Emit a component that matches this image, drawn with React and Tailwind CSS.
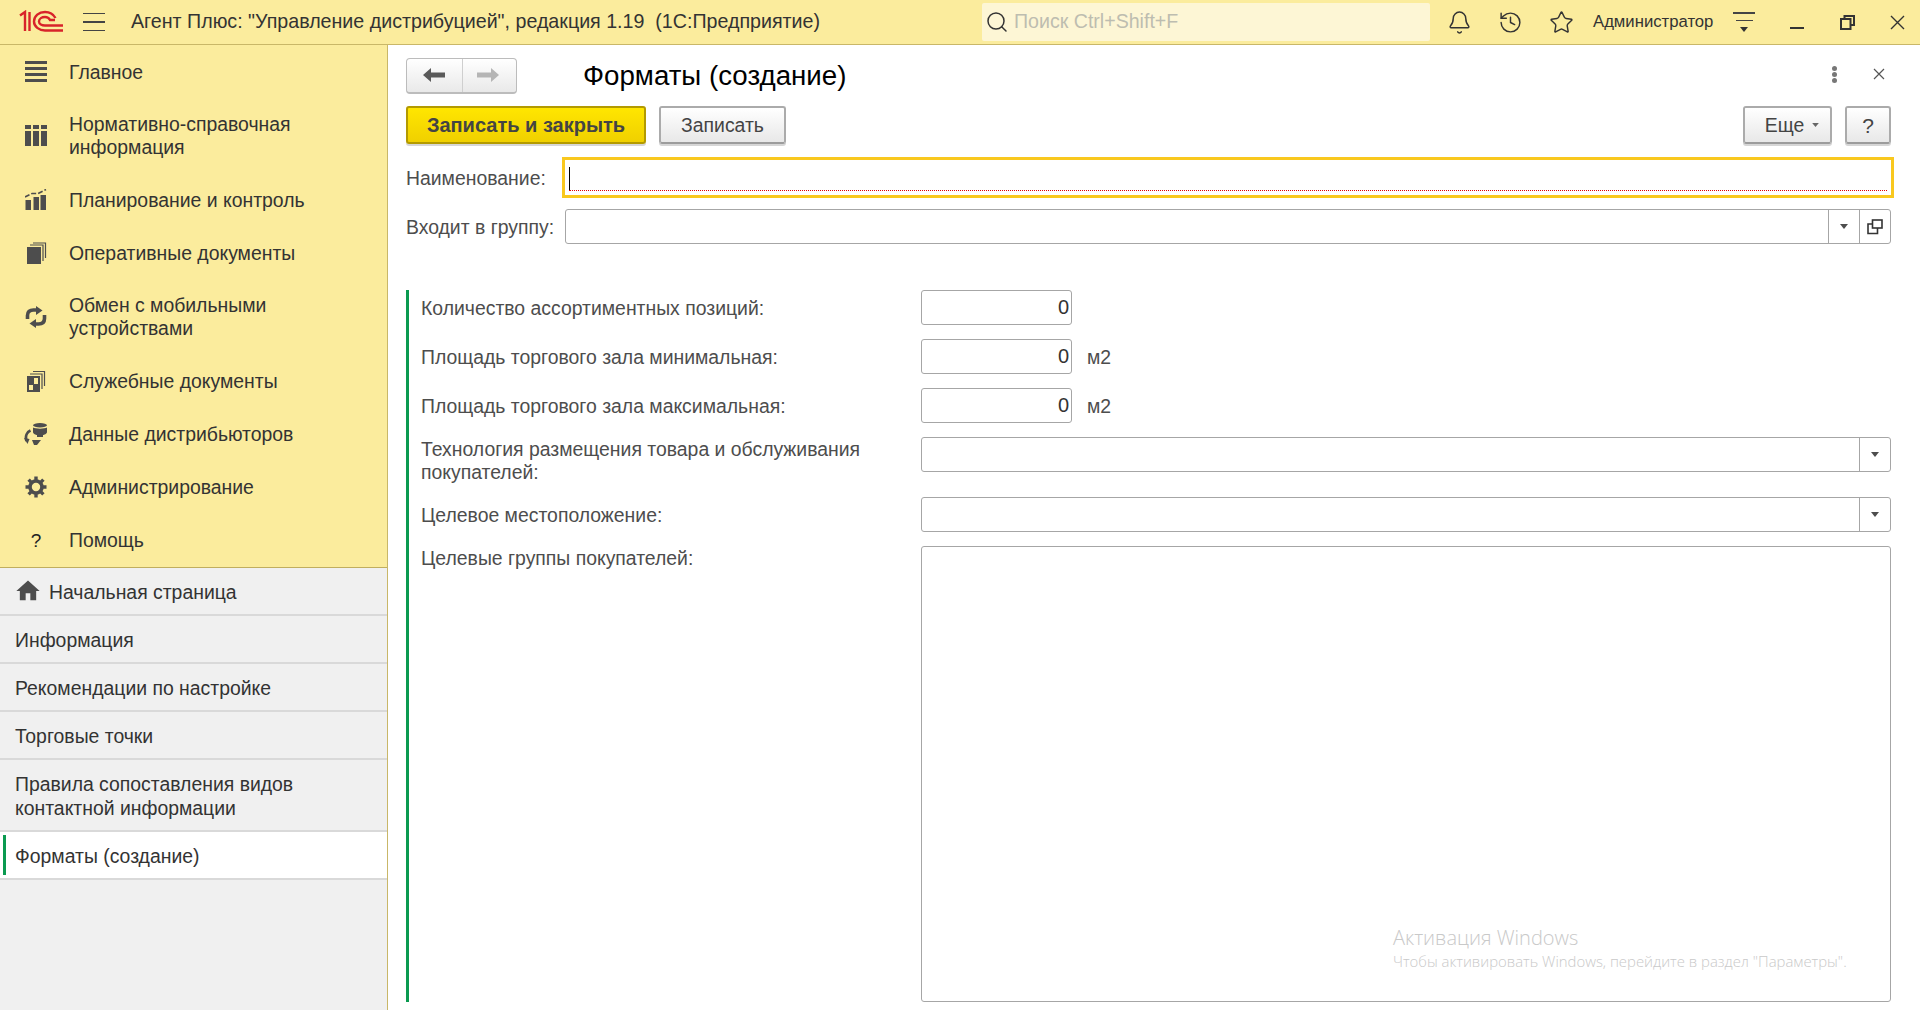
import React from "react";
import { Bell, History, Star, Search } from "lucide-react";
import { MdHome } from "react-icons/md";

const font = "font-['Liberation_Sans',Arial,sans-serif]";

function Logo() {
  return (
    <svg width="46" height="24" viewBox="0 0 46 24" fill="none" stroke="#d8232a" strokeWidth="2.4">
      <path d="M1 5.5 L6 2 V21" />
      <path d="M10.5 2 V21" />
      <path d="M44 20.5 H26 C20 20.5 15 16.5 15 11.5 C15 6 20 2 26 2 C31 2 34.5 4.5 36.5 8" />
      <path d="M44 15.5 H26 C23 15.5 20 14 20 11.5 C20 8.5 23 7 26 7 C28.5 7 30 8 31 10 H36" />
    </svg>
  );
}

function IconMain() {
  return (
    <svg width="22" height="22" viewBox="0 0 22 22" fill="#4d4d4d">
      <rect x="0" y="0" width="22" height="3" />
      <rect x="0" y="6" width="22" height="3" />
      <rect x="0" y="12" width="22" height="3" />
      <rect x="0" y="18" width="22" height="3" />
    </svg>
  );
}

function IconTable() {
  return (
    <svg width="22" height="22" viewBox="0 0 22 22" fill="#4d4d4d">
      <rect x="0" y="0" width="6" height="4" />
      <rect x="8" y="0" width="6" height="4" />
      <rect x="16" y="0" width="6" height="4" />
      <rect x="0" y="6" width="6" height="15" />
      <rect x="8" y="6" width="6" height="15" />
      <rect x="16" y="6" width="6" height="15" />
    </svg>
  );
}

function IconChart() {
  return (
    <svg width="22" height="22" viewBox="0 0 22 22" fill="#4d4d4d">
      <rect x="0.5" y="11" width="5.5" height="10" />
      <rect x="8.5" y="8" width="5.5" height="13" />
      <rect x="15.5" y="6" width="5.5" height="15" />
      <path d="M0 8 L7 4.5 L13 4.5 L21 0.5" fill="none" stroke="#4d4d4d" strokeWidth="1.6" strokeDasharray="5 2" />
    </svg>
  );
}

function IconDocs() {
  return (
    <svg width="22" height="22" viewBox="0 0 22 22" fill="#4d4d4d">
      <rect x="2" y="5" width="14" height="17" />
      <path d="M5 3 H18 V19" fill="none" stroke="#4d4d4d" strokeWidth="1.2" />
      <path d="M8 1 H20.5 V16" fill="none" stroke="#4d4d4d" strokeWidth="1.2" />
    </svg>
  );
}

function IconSync() {
  return (
    <svg width="22" height="22" viewBox="0 0 22 22" fill="#4d4d4d">
      <path d="M2.5 13 V9.5 Q2.5 4 8.5 4 H12" fill="none" stroke="#4d4d4d" strokeWidth="3.6" />
      <path d="M11 0 L17.5 4.5 L11 9 Z" />
      <path d="M19.5 9 V12.5 Q19.5 18 13.5 18 H10" fill="none" stroke="#4d4d4d" strokeWidth="3.6" />
      <path d="M11 13 L4.5 17.5 L11 22 Z" />
    </svg>
  );
}

function IconServiceDocs() {
  return (
    <svg width="22" height="22" viewBox="0 0 22 22" fill="#4d4d4d">
      <rect x="2" y="6" width="13" height="16" />
      <rect x="9" y="8" width="4" height="6" fill="#fbec9d" />
      <rect x="4" y="15" width="4" height="5" fill="#fbec9d" />
      <path d="M5 4 H17 V19" fill="none" stroke="#4d4d4d" strokeWidth="1.2" />
      <path d="M8 1.5 H19.5 V16" fill="none" stroke="#4d4d4d" strokeWidth="1.2" />
    </svg>
  );
}

function IconData() {
  return (
    <svg width="24" height="22" viewBox="0 0 24 22" fill="#4d4d4d">
      <ellipse cx="16" cy="2.2" rx="7" ry="2.2" />
      <path d="M9 4.5 C11 6 21 6 23 4.5 V9 C23 11 20 12 19 12 V14 H13 V12 C12 12 9 11 9 9 Z" />
      <path d="M6.5 7.5 C3 9 1 13 2.5 18" fill="none" stroke="#4d4d4d" strokeWidth="2.8" />
      <path d="M0 15 L5.5 16 L3.5 21 Z" />
      <path d="M8 17 H17 L13 22 H10 Z" />
    </svg>
  );
}

function IconGear() {
  return (
    <svg width="22" height="22" viewBox="0 0 22 22" fill="none" stroke="#4d4d4d">
      <circle cx="11" cy="11" r="6" strokeWidth="3.6" />
      <path d="M11 0.5 V5 M11 17 V21.5 M0.5 11 H5 M17 11 H21.5 M3.6 3.6 L6.6 6.6 M15.4 15.4 L18.4 18.4 M18.4 3.6 L15.4 6.6 M6.6 15.4 L3.6 18.4" strokeWidth="3.4" />
    </svg>
  );
}

function Arrow({ color, flip }) {
  return (
    <svg width="22" height="14" viewBox="0 0 22 14" fill={color} className={flip ? "rotate-180" : ""}>
      <path d="M0 7 L8 0 V4.5 H22 V9.5 H8 V14 Z" />
    </svg>
  );
}

function Caret({ color = "#4d4d4d", small }) {
  return (
    <svg width={small ? 8 : 7} height={small ? 5 : 4} viewBox="0 0 10 6" fill={color}>
      <path d="M0 0 H10 L5 6 Z" />
    </svg>
  );
}

function OpenIcon() {
  return (
    <svg width="16" height="16" viewBox="0 0 16 16" fill="none" stroke="#333" strokeWidth="1.6">
      <rect x="5.5" y="1" width="9.5" height="8" />
      <path d="M5.5 5 H1 V14.5 H10.5 V9" />
    </svg>
  );
}

const navItems = [
  { label: "Главное", icon: <IconMain />, h: "h-[53px]" },
  { label: "Нормативно-справочная информация", icon: <IconTable />, h: "h-[75px]" },
  { label: "Планирование и контроль", icon: <IconChart />, h: "h-[53px]" },
  { label: "Оперативные документы", icon: <IconDocs />, h: "h-[53px]" },
  { label: "Обмен с мобильными устройствами", icon: <IconSync />, h: "h-[75px]" },
  { label: "Служебные документы", icon: <IconServiceDocs />, h: "h-[53px]" },
  { label: "Данные дистрибьюторов", icon: <IconData />, h: "h-[53px]" },
  { label: "Администрирование", icon: <IconGear />, h: "h-[53px]" },
  { label: "Помощь", icon: <span className="text-[19px] text-[#222]">?</span>, h: "h-[54px]" },
];

const openPages = [
  "Информация",
  "Рекомендации по настройке",
  "Торговые точки",
];

function TopBar() {
  return (
    <div className="flex h-[45px] shrink-0 items-center border-b border-[#c9b768] bg-[#fbec9d]">
      <div className="ml-[19px] w-[46px]">
        <Logo />
      </div>
      <div className="ml-[18px] flex w-[22px] flex-col gap-[7px]">
        <div className="h-[1.5px] bg-[#444]" />
        <div className="h-[1.5px] bg-[#444]" />
        <div className="h-[1.5px] bg-[#444]" />
      </div>
      <div className="ml-[26px] w-[851px] text-[19.65px] whitespace-pre text-[#333]">
        Агент Плюс: "Управление дистрибуцией", редакция 1.19  (1С:Предприятие)
      </div>
      <div className="flex h-[38px] w-[448px] items-center rounded-[2px] bg-[#fdf6d5] pl-[3px]">
        <Search size={24} strokeWidth={1.5} color="#333" />
        <span className="ml-[5px] text-[19.6px] text-[#bdbdb0]">Поиск Ctrl+Shift+F</span>
      </div>
      <div className="ml-[16px] flex w-[26px] justify-center">
        <Bell size={25} strokeWidth={1.4} color="#333" />
      </div>
      <div className="ml-[25px] flex w-[26px] justify-center">
        <History size={25} strokeWidth={1.4} color="#333" />
      </div>
      <div className="ml-[25px] flex w-[26px] justify-center">
        <Star size={25} strokeWidth={1.4} color="#333" />
      </div>
      <div className="ml-[19px] -mt-[1px] w-[120px] text-[16.7px] whitespace-nowrap text-[#333]">Администратор</div>
      <div className="ml-[20px] flex w-[22px] flex-col items-center gap-[6px]">
        <div className="h-[1.5px] w-full bg-[#444]" />
        <div className="h-[1.5px] w-[17px] bg-[#444]" />
        <Caret color="#333" small />
      </div>
      <div className="ml-[35px] mt-[11px] h-[2px] w-[14px] bg-[#333]" />
      <div className="ml-[36px]">
        <svg width="15" height="15" viewBox="0 0 15 15" fill="none" stroke="#333" strokeWidth="2">
          <rect x="1" y="4" width="9.5" height="10" />
          <path d="M4.5 3 V1 H14 V10 H11" />
        </svg>
      </div>
      <div className="ml-[35px]">
        <svg width="15" height="15" viewBox="0 0 15 15" fill="none" stroke="#333" strokeWidth="1.4">
          <path d="M1 1 L14 14 M14 1 L1 14" />
        </svg>
      </div>
    </div>
  );
}

function Sidebar() {
  return (
    <div className="flex w-[388px] shrink-0 flex-col border-r border-[#c9b768] bg-[#f0f0f0] text-[19.4px] leading-[23px] text-[#333]">
      <div className="border-b border-[#c0ae5e] bg-[#fbec9d]">
        {navItems.map((item) => (
          <div key={item.label} className={`flex items-center ${item.h}`}>
            <div className="flex w-[69px] shrink-0 justify-center pl-[3px]">{item.icon}</div>
            <div className="w-[270px] pt-[1px]">{item.label}</div>
          </div>
        ))}
      </div>
      <div className="flex h-[48px] items-center border-b-2 border-[#d9d9d9] pl-[14px]">
        <MdHome size={28} color="#4d4d4d" />
        <span className="ml-[7px] pt-[2px]">Начальная страница</span>
      </div>
      {openPages.map((p) => (
        <div key={p} className="flex h-[48px] items-center border-b-2 border-[#d9d9d9] pl-[15px] pt-[2px]">
          {p}
        </div>
      ))}
      <div className="flex h-[72px] items-center border-b-2 border-[#d9d9d9] pl-[15px] pt-[1px]">
        <div className="w-[300px] leading-[24px]">Правила сопоставления видов контактной информации</div>
      </div>
      <div className="flex h-[48px] items-center border-b-2 border-[#d9d9d9] bg-white pl-[3px]">
        <div className="h-[40px] w-[3px] bg-[#0a9a50]" />
        <span className="ml-[9px] pt-[2px]">Форматы (создание)</span>
      </div>
    </div>
  );
}

function Btn({ className = "", children }) {
  return (
    <div className={`flex h-[38px] items-center justify-center rounded-[3px] border-2 border-[#ababab] border-b-[#9c9c9c] bg-gradient-to-b from-white to-[#e8e8e8] text-[#444] shadow-[0_2px_0_#d6d6d6] ${className}`}>
      {children}
    </div>
  );
}

function Field({ className = "", dropdown, open, children }) {
  return (
    <div className={`flex h-[35px] items-stretch rounded-[3px] border border-[#a6a6a6] bg-white ${className}`}>
      <div className="flex flex-1 items-center justify-end pr-[2px] text-[20px] text-[#333]">{children}</div>
      {dropdown && (
        <div className="flex w-[31px] items-center justify-center border-l border-[#a6a6a6]">
          <Caret small />
        </div>
      )}
      {open && (
        <div className="flex w-[31px] items-center justify-center border-l border-[#a6a6a6]">
          <OpenIcon />
        </div>
      )}
    </div>
  );
}

function FormRow({ label, className = "", unit, children }) {
  return (
    <div className={`flex items-center ${className}`}>
      <div className="w-[500px] shrink-0 pr-[20px] pt-[1px]">{label}</div>
      {children}
      {unit && <span className="ml-[15px] pt-[1px]">{unit}</span>}
    </div>
  );
}

function Form() {
  return (
    <div className="relative flex min-w-0 flex-1 flex-col bg-white pl-[18px] pr-[29px] text-[19.4px] leading-[23px] text-[#4d4d4d]">
      <div className="mt-[12px] flex h-[37px] items-center">
        <div className="flex h-[36px] w-[111px] rounded-[4px] border border-b-2 border-[#bcbcbc] bg-gradient-to-b from-white to-[#e9e9e9]">
          <div className="flex w-[56px] items-center justify-center border-r border-[#cfcfcf] pr-[2px]">
            <Arrow color="#5a5a5a" />
          </div>
          <div className="flex flex-1 items-center justify-center pr-[3px]">
            <Arrow color="#b5b5b5" flip />
          </div>
        </div>
        <div className="ml-[66px] text-[27.7px] text-black">Форматы (создание)</div>
        <div className="ml-auto -mt-[3px] flex flex-col gap-[1px]">
          <div className="h-[5px] w-[5px] rounded-full bg-[#777]" />
          <div className="h-[5px] w-[5px] rounded-full bg-[#777]" />
          <div className="h-[5px] w-[5px] rounded-full bg-[#777]" />
        </div>
        <div className="ml-[36px] mr-[6px] -mt-[3px]">
          <svg width="12" height="12" viewBox="0 0 12 12" fill="none" stroke="#555" strokeWidth="1.2">
            <path d="M1 1 L11 11 M11 1 L1 11" />
          </svg>
        </div>
      </div>

      <div className="mt-[12px] flex items-center">
        <div className="flex h-[38px] w-[240px] items-center justify-center rounded-[3px] border-2 border-[#b39a00] bg-gradient-to-b from-[#ffe600] to-[#f0d000] text-[20px] font-bold text-[#444] shadow-[0_2px_0_#d6d6d6]">
          Записать и закрыть
        </div>
        <Btn className="ml-[13px] w-[127px]">Записать</Btn>
        <Btn className="ml-auto w-[89px]">
          <span className="ml-[9px]">Еще</span>
          <span className="ml-[8px] flex"><Caret color="#666" /></span>
        </Btn>
        <Btn className="ml-[13px] w-[46px] text-[#222]"><span className="text-[21px]">?</span></Btn>
      </div>

      <div className="mt-[13px] flex items-center">
        <div className="w-[156px] shrink-0 pt-[1px]">Наименование:</div>
        <div className="-mr-[3px] flex h-[41px] flex-1 items-end border-[3px] border-[#f9c81e] bg-white px-[4px] pb-[4px]">
          <div className="relative h-[1px] w-full border-b border-dotted border-[#e00000]">
            <div className="absolute bottom-0 left-[0px] h-[23px] w-[1px] bg-black" />
          </div>
        </div>
      </div>

      <div className="mt-[11px] flex items-center">
        <div className="w-[159px] shrink-0 pt-[1px]">Входит в группу:</div>
        <Field className="flex-1" dropdown open />
      </div>

      <div className="mt-[46px] flex h-[712px] flex-col border-l-[3px] border-[#0a9a50] pl-[12px]">
        <FormRow label="Количество ассортиментных позиций:">
          <Field className="w-[151px]">0</Field>
        </FormRow>
        <FormRow label="Площадь торгового зала минимальная:" className="mt-[14px]" unit="м2">
          <Field className="w-[151px]">0</Field>
        </FormRow>
        <FormRow label="Площадь торгового зала максимальная:" className="mt-[14px]" unit="м2">
          <Field className="w-[151px]">0</Field>
        </FormRow>
        <div className="mt-[14px] flex h-[35px] items-start">
          <div className="w-[500px] shrink-0 pr-[20px] pt-[1px]">Технология размещения товара и обслуживания покупателей:</div>
          <Field className="flex-1" dropdown />
        </div>
        <FormRow label="Целевое местоположение:" className="mt-[25px]">
          <Field className="flex-1" dropdown />
        </FormRow>
        <div className="mt-[14px] flex min-h-0 flex-1">
          <div className="w-[500px] shrink-0 pt-[1px]">Целевые группы покупателей:</div>
          <div className="flex-1 rounded-[3px] border border-[#a6a6a6] bg-white" />
        </div>
      </div>

      {/* watermark from the OS, sits over the window */}
      <div className="absolute left-[1005px] top-[880px] font-['Open_Sans',sans-serif] text-[#c9c9c9]">
        <div className="text-[20px] leading-[26px] font-light">Активация Windows</div>
        <div className="mt-[1px] text-[14.9px] leading-[18px] font-light whitespace-nowrap">Чтобы активировать Windows, перейдите в раздел "Параметры".</div>
      </div>
    </div>
  );
}

export default function App() {
  return (
    <div className={`flex h-screen w-full flex-col overflow-hidden bg-white ${font}`}>
      <TopBar />
      <div className="flex min-h-0 flex-1">
        <Sidebar />
        <Form />
      </div>
    </div>
  );
}
